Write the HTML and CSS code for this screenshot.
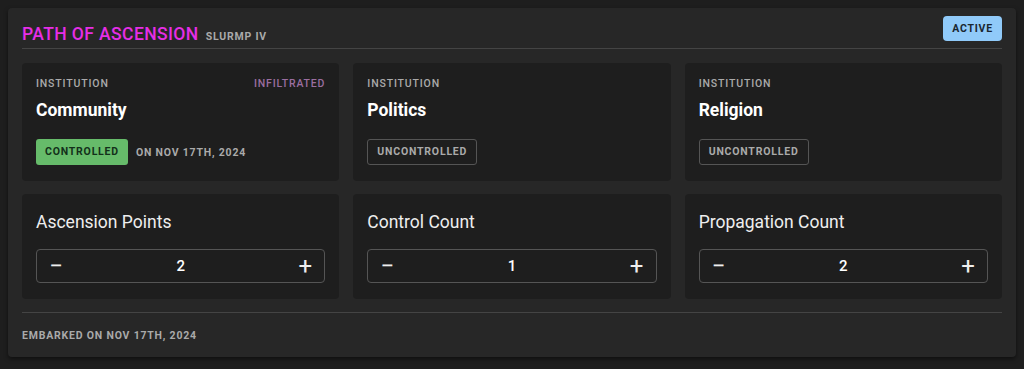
FILE: index.html
```html
<!DOCTYPE html>
<html>
<head>
    <title>Path of Ascension</title>
    <link rel="stylesheet" href="styles.css">
</head>
<body>
    <div class="card">
        <div class="card-header">
            <div class="title">
                <h1>Path of Ascension</h1>
                <span class="subtitle">Slurmp IV</span>
            </div>
            <span class="badge">Active</span>
        </div>

        <div class="grid">
            <div class="panel">
                <div class="panel-top">
                    <span class="label">Institution</span>
                    <span class="label infiltrated">Infiltrated</span>
                </div>
                <h2>Community</h2>
                <div class="status">
                    <span class="chip chip-green">Controlled</span>
                    <span class="date">On Nov 17th, 2024</span>
                </div>
            </div>
            <div class="panel">
                <div class="panel-top">
                    <span class="label">Institution</span>
                </div>
                <h2>Politics</h2>
                <div class="status">
                    <span class="chip chip-outline">Uncontrolled</span>
                </div>
            </div>
            <div class="panel">
                <div class="panel-top">
                    <span class="label">Institution</span>
                </div>
                <h2>Religion</h2>
                <div class="status">
                    <span class="chip chip-outline">Uncontrolled</span>
                </div>
            </div>

            <div class="panel counter">
                <h3>Ascension Points</h3>
                <div class="stepper">
                    <span class="step">&minus;</span>
                    <span class="value">2</span>
                    <span class="step">+</span>
                </div>
            </div>
            <div class="panel counter">
                <h3>Control Count</h3>
                <div class="stepper">
                    <span class="step">&minus;</span>
                    <span class="value">1</span>
                    <span class="step">+</span>
                </div>
            </div>
            <div class="panel counter">
                <h3>Propagation Count</h3>
                <div class="stepper">
                    <span class="step">&minus;</span>
                    <span class="value">2</span>
                    <span class="step">+</span>
                </div>
            </div>
        </div>

        <div class="card-footer">Embarked on Nov 17th, 2024</div>
    </div>
</body>
</html>
```

FILE: styles.css
```css
body {
    font-family: Roboto, "Liberation Sans", sans-serif;
    margin: 0;
    padding: 8px;
    background-color: #1e1e1e;
    color: #fff;
}

.card {
    background-color: #272727;
    border-radius: 4px;
    padding: 8px 14px 0 14px;
    box-shadow: 0 2px 4px rgba(0, 0, 0, 0.5);
}

.card-header {
    display: flex;
    justify-content: space-between;
    align-items: flex-start;
    border-bottom: 1px solid #444;
    height: 32px;
}

.title {
    display: flex;
    align-items: baseline;
    gap: 7px;
    padding-top: 8px;
}

h1 {
    margin: 0;
    font-size: 17.5px;
    font-weight: 500;
    text-transform: uppercase;
    color: #e62ee6;
    letter-spacing: 0.4px;
}

.subtitle {
    font-size: 10.5px;
    font-weight: 700;
    text-transform: uppercase;
    color: #aaa;
    letter-spacing: 0.8px;
}

.badge {
    background-color: #90caf9;
    color: #1a2630;
    font-size: 10.5px;
    font-weight: 700;
    text-transform: uppercase;
    letter-spacing: 0.8px;
    border-radius: 4px;
    padding: 0 9px;
    height: 25px;
    line-height: 25px;
}

.grid {
    display: grid;
    grid-template-columns: 1fr 1fr 1fr;
    column-gap: 14px;
    row-gap: 13px;
    padding: 14px 0 13px 0;
    border-bottom: 1px solid #444;
}

.panel {
    background-color: #1e1e1e;
    border-radius: 4px;
    padding: 14px 14px 16px 14px;
}

.panel-top {
    display: flex;
    justify-content: space-between;
    height: 14px;
    line-height: 14px;
}

.label {
    font-size: 10.5px;
    font-weight: 500;
    text-transform: uppercase;
    letter-spacing: 0.85px;
    color: #aaa;
}

.infiltrated {
    color: #9b6ea0;
}

h2 {
    margin: 8px 0 0 0;
    font-size: 17.5px;
    font-weight: 700;
    line-height: 22px;
}

.status {
    display: flex;
    align-items: center;
    gap: 8px;
    margin-top: 18px;
}

.chip {
    font-size: 10.5px;
    font-weight: 700;
    text-transform: uppercase;
    letter-spacing: 0.8px;
    border-radius: 3px;
    height: 26px;
    line-height: 26px;
    padding: 0 9px;
    box-sizing: border-box;
}

.chip-green {
    background-color: #66bb6a;
    color: #13301a;
}

.chip-outline {
    border: 1px solid #555;
    color: #aaa;
    line-height: 24px;
}

.date {
    font-size: 10.5px;
    font-weight: 700;
    text-transform: uppercase;
    letter-spacing: 0.8px;
    color: #aaa;
}

.counter {
    padding: 17px 14px 16px 14px;
}

h3 {
    margin: 0 0 16px 0;
    font-size: 17.5px;
    font-weight: 400;
    line-height: 22px;
    color: #eee;
}

.stepper {
    display: flex;
    align-items: center;
    justify-content: space-between;
    border: 1px solid #555;
    border-radius: 4px;
    height: 34px;
    box-sizing: border-box;
    padding: 0 10px 0 10px;
}

.step {
    font-size: 24px;
    font-weight: 400;
    width: 18px;
    text-align: center;
    color: #eee;
}

.value {
    font-size: 15px;
    font-weight: 500;
}

.card-footer {
    font-size: 10.5px;
    font-weight: 700;
    text-transform: uppercase;
    letter-spacing: 0.8px;
    color: #aaa;
    padding: 16px 0 15px 0;
}
```
